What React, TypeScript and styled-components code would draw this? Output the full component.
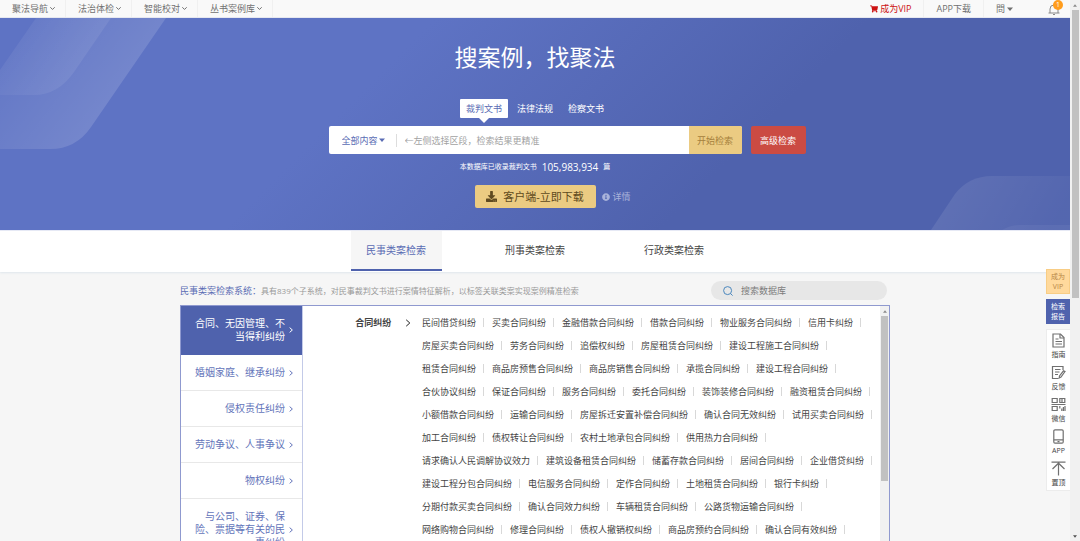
import React from "react";
import styled, { createGlobalStyle } from "styled-components";
import { FaDownload, FaInfoCircle, FaShoppingCart } from "react-icons/fa";

const GlobalStyle = createGlobalStyle`
  *, *::before, *::after { box-sizing: border-box; }
  body {
    margin: 0;
    background: #f6f6f6;
    color: #444;
    font-family: "Open Sans", "Noto Sans CJK SC", sans-serif;
    font-size: 9px;
    line-height: 13px;
  }
  button, input, select { font: inherit; color: inherit; border: 0; padding: 0; margin: 0; background: none; }
  button { cursor: pointer; }
  a { color: inherit; text-decoration: none; }
  h1, h2, p, ul { margin: 0; padding: 0; font-weight: 400; }
  ul { list-style: none; }
  svg { display: block; flex: none; }
`;

const Page = styled.div`
  display: flex;
  height: 100vh;
  overflow: hidden;
`;

const Main = styled.main`
  position: relative;
  flex: 1;
  min-width: 0;
  overflow: hidden;
`;

const ScrollTrack = styled.div<{ $width: number }>`
  display: flex;
  flex-direction: column;
  align-items: center;
  flex: none;
  width: ${(p) => p.$width}px;
  background: #f1f1f1;
`;

const ScrollArrow = styled.svg`
  width: 4px;
  height: 3px;
  margin: 4px 0 3px;
`;

const ScrollThumb = styled.div<{ $height: string }>`
  width: 7px;
  height: ${(p) => p.$height};
  background: #c1c1c1;
`;

const Spacer = styled.div`
  flex: 1;
`;

const TopBar = styled.nav`
  display: flex;
  height: 18px;
  background: #f9f9f9;
  border-bottom: 1px solid #e6e8f0;
  color: #707070;
`;

const NavItem = styled.a<{ $accent?: boolean; $last?: boolean; $wide?: boolean }>`
  display: flex;
  align-items: center;
  gap: 2px;
  padding: 0 ${(p) => (p.$wide ? 12 : 10)}px 0 12px;
  white-space: nowrap;
  border-right: 1px solid ${(p) => (p.$last ? "transparent" : "#f0f0f0")};
  color: ${(p) => (p.$accent ? "#cc1111" : "inherit")};
`;

const Alerts = styled.button`
  position: relative;
  width: 12px;
  margin: 0 10px 0 22px;
  display: flex;
  align-items: center;
`;

const AlertCount = styled.span`
  position: absolute;
  top: 0;
  left: 5px;
  width: 10px;
  height: 10px;
  border-radius: 5px;
  background: #ff9d1e;
  color: #fff;
  font-size: 7px;
  line-height: 10px;
  text-align: center;
`;

const Hero = styled.header`
  position: relative;
  display: flex;
  flex-direction: column;
  align-items: center;
  height: 212px;
  color: #fff;
  background: linear-gradient(135deg, #5e73c4 34%, #4f62ad 68%);
`;

const Ornament = styled.svg<{ $side: "left" | "right" }>`
  position: absolute;
  ${(p) => (p.$side === "left" ? "left: 0; top: 0;" : "right: 0; bottom: 0;")}
`;

const HeroTitle = styled.h1`
  margin-top: 23px;
  font-size: 23px;
  line-height: 32px;
`;

const KindTabs = styled.div`
  display: flex;
  gap: 3px;
  margin-top: 26px;
`;

const KindTab = styled.button<{ $active?: boolean }>`
  position: relative;
  height: 19px;
  padding: 0 6px;
  border-radius: 1px;
  color: ${(p) => (p.$active ? "#5a6cb4" : "#fff")};
  background: ${(p) => (p.$active ? "#fff" : "transparent")};
  &::after {
    content: ${(p) => (p.$active ? '""' : "none")};
    position: absolute;
    top: 100%;
    left: 50%;
    margin-left: -5px;
    border: 5px solid transparent;
    border-top-color: #fff;
    border-bottom: 0;
  }
`;

const CenteredRow = styled.div<{ $top: number; $gap: number }>`
  position: relative;
  display: grid;
  grid-template-columns: 1fr auto 1fr;
  align-items: center;
  justify-items: start;
  column-gap: ${(p) => p.$gap}px;
  width: 100%;
  margin-top: ${(p) => p.$top}px;
  & > :first-child { grid-column: 2; }
`;

const SearchForm = styled.form`
  display: flex;
  align-items: center;
  width: 413px;
  height: 28px;
  border-radius: 2px;
  overflow: hidden;
  background: #fff;
`;

const ScopeLabel = styled.label`
  display: flex;
  align-items: center;
  gap: 1px;
  padding-left: 13px;
  padding-right: 11px;
  border-right: 1px solid #ddd;
  color: #5a6cb4;
`;

const ScopeSelect = styled.select`
  appearance: none;
  width: 36px;
  outline: none;
`;

const QueryInput = styled.input`
  flex: 1;
  min-width: 0;
  padding-left: 8px;
  color: #333;
  outline: none;
  &::placeholder { color: #a2a2a2; opacity: 1; }
`;

const SubmitButton = styled.button`
  align-self: stretch;
  width: 53px;
  background: #ebcb82;
  color: #a5803c;
`;

const AdvancedButton = styled.button`
  width: 55px;
  height: 28px;
  border-radius: 2px;
  background: #cb4b43;
  color: #fff;
`;

const Stats = styled.p`
  display: flex;
  align-items: center;
  gap: 5px;
  margin-top: 6px;
  font-size: 7px;
  line-height: 14px;
`;

const StatsNumber = styled.span`
  font-size: 10px;
`;

const DownloadButton = styled.button`
  display: flex;
  align-items: center;
  justify-content: center;
  gap: 6px;
  width: 121px;
  height: 23px;
  border-radius: 2px;
  background: #ebcb82;
  color: #5f4a20;
  font-size: 11px;
`;

const DetailLink = styled.a`
  display: flex;
  align-items: center;
  gap: 3px;
  color: #a9b3da;
`;

const CategoryTabs = styled.div`
  display: flex;
  justify-content: center;
  gap: 48px;
  height: 42px;
  background: #fff;
  border-top: 1px solid #e6e9f5;
  box-shadow: 0 1px 2px #dfe6ec;
`;

const CategoryTab = styled.button<{ $active?: boolean }>`
  width: 91px;
  height: 40px;
  padding-top: 1px;
  font-size: 10px;
  border-bottom: 2px solid ${(p) => (p.$active ? "#4f62ad" : "transparent")};
  background: ${(p) => (p.$active ? "#f6f6f6" : "transparent")};
  color: ${(p) => (p.$active ? "#5a6cb4" : "#444")};
`;

const Content = styled.section`
  width: 66.3%;
  min-width: 710px;
  margin: 0 auto;
  padding-top: 9px;
`;

const Intro = styled.div`
  display: flex;
  align-items: center;
  justify-content: space-between;
  padding-right: 3px;
`;

const IntroText = styled.p`
  font-size: 8px;
  color: #999;
`;

const IntroName = styled.strong`
  font-size: 9px;
  font-weight: 400;
  color: #5a6cb4;
`;

const DatabaseSearch = styled.label`
  display: flex;
  align-items: center;
  gap: 8px;
  width: 176px;
  height: 19px;
  padding: 0 12px;
  border-radius: 10px;
  background: #e7e7e7;
`;

const DatabaseInput = styled.input`
  flex: 1;
  min-width: 0;
  outline: none;
  &::placeholder { color: #7c7c7c; opacity: 1; }
`;

const Panel = styled.div`
  display: flex;
  height: 420px;
  margin-top: 5px;
  border: 1px solid #8f99cf;
  background: #fff;
`;

const CauseList = styled.ul`
  flex: none;
  width: 122px;
  border-right: 1px solid #c3cae8;
`;

const CauseItem = styled.button<{ $active?: boolean }>`
  display: flex;
  align-items: center;
  justify-content: flex-end;
  gap: 3px;
  width: 100%;
  padding: 11px 8px 11px 14px;
  font-size: 10px;
  text-align: right;
  border-bottom: 1px solid ${(p) => (p.$active ? "#4f62ad" : "#e8e8e8")};
  background: ${(p) => (p.$active ? "#4f62ad" : "#fff")};
  color: ${(p) => (p.$active ? "#fff" : "#6374ba")};
`;

const CauseName = styled.span`
  width: 90px;
`;

const Group = styled.div`
  display: flex;
  flex: 1;
  min-width: 0;
  padding-top: 5px;
  line-height: 23px;
`;

const GroupName = styled.h2`
  width: 90px;
  font-size: 9px;
  font-weight: 700;
  text-align: right;
`;

const GroupArrow = styled.div`
  display: flex;
  align-items: center;
  width: 31px;
  height: 23px;
  padding-left: 13px;
`;

const LinkRow = styled.div`
  display: flex;
  white-space: nowrap;
`;

const CaseLink = styled.a`
  display: flex;
  align-items: center;
  &::after {
    content: "";
    width: 1px;
    height: 9px;
    margin: 0 8px 0 7px;
    background: #d8d8d8;
  }
`;

const SideRail = styled.aside`
  position: absolute;
  top: 269px;
  right: 0;
  display: flex;
  flex-direction: column;
  gap: 5px;
  width: 24px;
  font-size: 7px;
  line-height: 10px;
`;

const RailBlock = styled.button<{ $tone: "gold" | "blue" }>`
  height: 25px;
  padding: 2px 4px;
  border: 1px solid ${(p) => (p.$tone === "gold" ? "#f8cd85" : "#4f62ad")};
  background: ${(p) => (p.$tone === "gold" ? "#ffd99c" : "#4f62ad")};
  color: ${(p) => (p.$tone === "gold" ? "#b88746" : "#fff")};
`;

const RailTools = styled.div`
  display: flex;
  flex-direction: column;
  gap: 5px;
  padding: 3px 0 2px;
  border: 1px solid #ececec;
  border-right: 0;
  background: #fff;
`;

const RailTool = styled.button`
  display: flex;
  flex-direction: column;
  align-items: center;
  gap: 2px;
  color: #444;
`;

const Chevron = ({ down, size, color = "currentColor" }: { down?: boolean; size: number; color?: string }) => (
  <svg width={size} height={size} viewBox="0 0 8 8" fill="none" stroke={color} strokeWidth={8 / size}>
    <path d={down ? "M0.5 2 L4 5.5 L7.5 2" : "M2.2 0.8 L5.8 4 L2.2 7.2"} />
  </svg>
);

const Caret = () => (
  <svg width="6" height="4" viewBox="0 0 6 4">
    <path fill="currentColor" d="M0 0.5h6L3 4z" />
  </svg>
);

const Arrow = ({ down, color = "#8a8a8a" }: { down?: boolean; color?: string }) => (
  <ScrollArrow viewBox="0 0 6 4">
    <path fill={color} d={down ? "M0 0h6L3 4z" : "M0 4h6L3 0z"} />
  </ScrollArrow>
);

const toolPaths: Record<string, React.ReactNode> = {
  指南: <><path d="M1.5 1h7.5l3.5 3.5V14h-11z" /><path d="M8.5 1v4h4M4 6h3M4 8.5h6.5M4 11h6.5" /></>,
  反馈: <><path d="M11.5 5V1.5H1V13.5H7M3.5 4.5h5.5M3.5 7h4.5M3.5 9.5h3" /><path d="M13.5 6.5 9.5 12l-1.8 1 .3-2 4-5.2z" /></>,
  微信: <path d="M0.7 1.5h5v4h-5zM8.3 1.5h5v4h-5zM0.7 9.5h5v4h-5zM0 7.5h14M8.3 9v2.5M10.3 11.5v2.5M11.9 10v4M13.5 9v5M10.5 2v3" />,
  APP: <><rect x="2.3" y="0.8" width="9.4" height="13.4" rx="1.2" /><path d="M2.3 10.8h9.4M6 12.6h2" /></>,
  置顶: <path d="M0 1.2h14M7 14.5V2M1 8 7 2.2 13 8" />,
};

const navItems = ["聚法导航", "法治体检", "智能校对", "丛书案例库"];
const kinds = ["裁判文书", "法律法规", "检察文书"];
const categories = ["民事类案检索", "刑事类案检索", "行政类案检索"];
const causes = [
  "合同、无因管理、不当得利纠纷",
  "婚姻家庭、继承纠纷",
  "侵权责任纠纷",
  "劳动争议、人事争议",
  "物权纠纷",
  "与公司、证券、保险、票据等有关的民事纠纷",
];
const caseRows = [
  ["民间借贷纠纷", "买卖合同纠纷", "金融借款合同纠纷", "借款合同纠纷", "物业服务合同纠纷", "信用卡纠纷"],
  ["房屋买卖合同纠纷", "劳务合同纠纷", "追偿权纠纷", "房屋租赁合同纠纷", "建设工程施工合同纠纷"],
  ["租赁合同纠纷", "商品房预售合同纠纷", "商品房销售合同纠纷", "承揽合同纠纷", "建设工程合同纠纷"],
  ["合伙协议纠纷", "保证合同纠纷", "服务合同纠纷", "委托合同纠纷", "装饰装修合同纠纷", "融资租赁合同纠纷"],
  ["小额借款合同纠纷", "运输合同纠纷", "房屋拆迁安置补偿合同纠纷", "确认合同无效纠纷", "试用买卖合同纠纷"],
  ["加工合同纠纷", "债权转让合同纠纷", "农村土地承包合同纠纷", "供用热力合同纠纷"],
  ["请求确认人民调解协议效力", "建筑设备租赁合同纠纷", "储蓄存款合同纠纷", "居间合同纠纷", "企业借贷纠纷"],
  ["建设工程分包合同纠纷", "电信服务合同纠纷", "定作合同纠纷", "土地租赁合同纠纷", "银行卡纠纷"],
  ["分期付款买卖合同纠纷", "确认合同效力纠纷", "车辆租赁合同纠纷", "公路货物运输合同纠纷"],
  ["网络购物合同纠纷", "修理合同纠纷", "债权人撤销权纠纷", "商品房预约合同纠纷", "确认合同有效纠纷"],
];

export default function App() {
  return (
    <Page>
      <GlobalStyle />
      <Main>
        <TopBar>
          {navItems.map((item) => (
            <NavItem href="#" key={item}>
              {item}
              <Chevron down size={5} />
            </NavItem>
          ))}
          <Spacer />
          <NavItem href="#" $accent $wide>
            <FaShoppingCart size={8} />
            成为VIP
          </NavItem>
          <NavItem href="#" $wide>APP下载</NavItem>
          <NavItem href="#" $wide $last>
            問
            <Caret />
          </NavItem>
          <Alerts aria-label="消息">
            <svg width="12" height="13" viewBox="0 0 12 13" fill="none" stroke="#888" strokeWidth="1">
              <path d="M0.5 11h11M2 11V7a4 4 0 0 1 8 0v4M6 3V2M5 12.5h2" />
            </svg>
            <AlertCount>1</AlertCount>
          </Alerts>
        </TopBar>

        <Hero>
          <Ornament $side="left" width="167" height="132" viewBox="0 0 167 132">
            <defs>
              <linearGradient id="bandOuter" gradientUnits="userSpaceOnUse" x1="10" y1="10" x2="110" y2="85">
                <stop offset="0" stopColor="#fff" stopOpacity="0.02" />
                <stop offset="1" stopColor="#fff" stopOpacity="0.14" />
              </linearGradient>
              <linearGradient id="bandInner" gradientUnits="userSpaceOnUse" x1="5" y1="10" x2="80" y2="60">
                <stop offset="0" stopColor="#fff" stopOpacity="0.01" />
                <stop offset="1" stopColor="#fff" stopOpacity="0.08" />
              </linearGradient>
            </defs>
            <path fill="url(#bandOuter)" d="M36 0H166L91 109Q76 131 50 131H0V52Z" />
            <path fill="url(#bandInner)" d="M36 0H111L74 54Q58 77 34 77H0V52Z" />
          </Ornament>
          <Ornament $side="right" width="139" height="54" viewBox="0 0 139 54">
            <defs>
              <linearGradient id="bandRight" gradientUnits="userSpaceOnUse" x1="20" y1="20" x2="110" y2="70">
                <stop offset="0" stopColor="#fff" stopOpacity="0.09" />
                <stop offset="1" stopColor="#fff" stopOpacity="0.03" />
              </linearGradient>
            </defs>
            <path fill="url(#bandRight)" d="M0 54 24 18Q38 0 61 0H139V54Z" />
            <path fill="#fff" fillOpacity="0.05" d="M71 54Q79 49 88 49H139V54Z" />
          </Ornament>

          <HeroTitle>搜案例，找聚法</HeroTitle>
          <KindTabs>
            {kinds.map((kind, i) => (
              <KindTab key={kind} $active={i === 0}>{kind}</KindTab>
            ))}
          </KindTabs>
          <CenteredRow $top={8} $gap={9}>
            <SearchForm onSubmit={(e) => e.preventDefault()}>
              <ScopeLabel>
                <ScopeSelect aria-label="检索范围">
                  <option>全部内容</option>
                </ScopeSelect>
                <Caret />
              </ScopeLabel>
              <QueryInput aria-label="检索词" placeholder="←左侧选择区段，检索结果更精准" />
              <SubmitButton type="submit">开始检索</SubmitButton>
            </SearchForm>
            <AdvancedButton>高级检索</AdvancedButton>
          </CenteredRow>
          <Stats>
            本数据库已收录裁判文书
            <StatsNumber>105,983,934</StatsNumber>
            篇
          </Stats>
          <CenteredRow $top={11} $gap={6}>
            <DownloadButton>
              <FaDownload size={11} />
              客户端-立即下载
            </DownloadButton>
            <DetailLink href="#">
              <FaInfoCircle size={8} />
              详情
            </DetailLink>
          </CenteredRow>
        </Hero>

        <CategoryTabs>
          {categories.map((category, i) => (
            <CategoryTab key={category} $active={i === 0}>{category}</CategoryTab>
          ))}
        </CategoryTabs>

        <Content>
          <Intro>
            <IntroText>
              <IntroName>民事类案检索系统：</IntroName>
              具有839个子系统，对民事裁判文书进行案情特征解析，以标签关联类案实现案例精准检索
            </IntroText>
            <DatabaseSearch>
              <svg width="10" height="10" viewBox="0 0 10 10" fill="none" stroke="#4b87bd" strokeWidth="1">
                <circle cx="4.6" cy="4.6" r="4" />
                <path d="M7.4 7.4 9.6 9.6" />
              </svg>
              <DatabaseInput aria-label="搜索数据库" placeholder="搜索数据库" />
            </DatabaseSearch>
          </Intro>

          <Panel>
            <CauseList>
              {causes.map((cause, i) => (
                <li key={cause}>
                  <CauseItem $active={i === 0}>
                    <CauseName>{cause}</CauseName>
                    <Chevron size={6} />
                  </CauseItem>
                </li>
              ))}
            </CauseList>
            <Group>
              <GroupName>合同纠纷</GroupName>
              <GroupArrow>
                <Chevron size={8} color="#222" />
              </GroupArrow>
              <div>
                {caseRows.map((row) => (
                  <LinkRow key={row[0]}>
                    {row.map((name) => (
                      <CaseLink href="#" key={name}>{name}</CaseLink>
                    ))}
                  </LinkRow>
                ))}
              </div>
            </Group>
            <ScrollTrack $width={9}>
              <Arrow />
              <ScrollThumb $height="165px" />
            </ScrollTrack>
          </Panel>
        </Content>

        <SideRail>
          <RailBlock $tone="gold">成为VIP</RailBlock>
          <RailBlock $tone="blue">检索报告</RailBlock>
          <RailTools>
            {Object.keys(toolPaths).map((name) => (
              <RailTool key={name}>
                <svg width="15" height="15" viewBox="0 0 14 15" fill="none" stroke="#707070" strokeWidth="1.2">
                  {toolPaths[name]}
                </svg>
                {name}
              </RailTool>
            ))}
          </RailTools>
        </SideRail>
      </Main>
      <ScrollTrack $width={10}>
        <Arrow />
        <ScrollThumb $height="53.2%" />
        <Spacer />
        <Arrow down color="#505050" />
      </ScrollTrack>
    </Page>
  );
}
